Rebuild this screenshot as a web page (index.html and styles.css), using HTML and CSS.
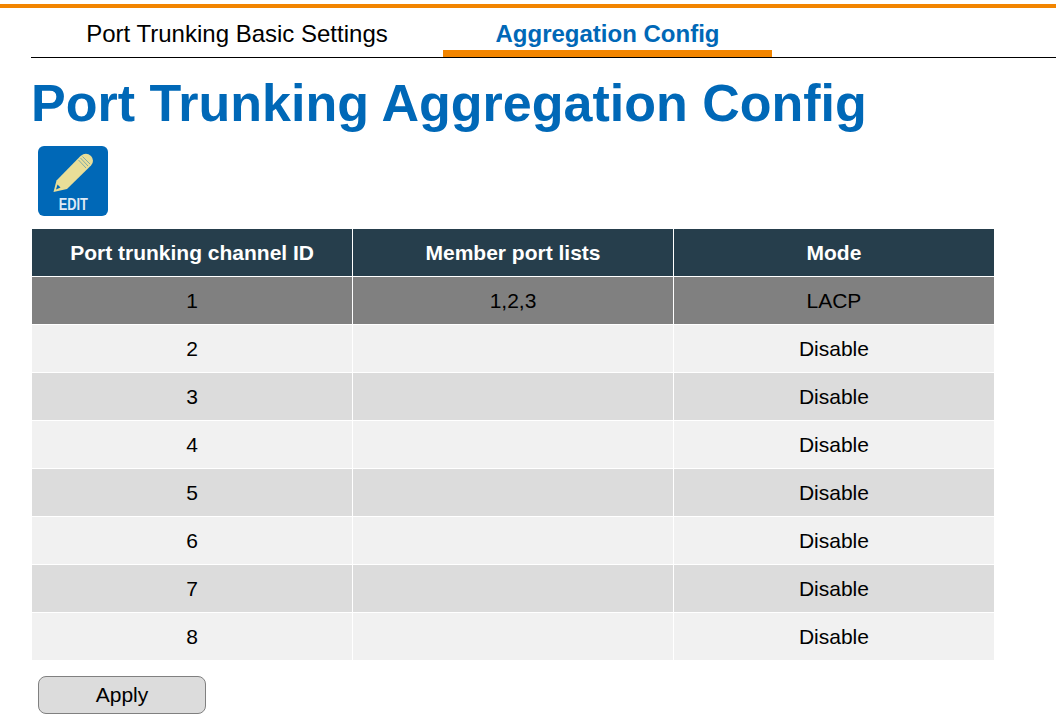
FILE: index.html
```html
<!DOCTYPE html>
<html lang="en">
<head>
    <meta charset="UTF-8">
    <title>Port Trunking Aggregation Config</title>
    <link rel="stylesheet" href="styles.css">
</head>
<body>
    <div class="top-bar"></div>
    <ul class="tabs">
        <li class="tab tab-basic">Port Trunking Basic Settings</li>
        <li class="tab tab-active">Aggregation Config</li>
    </ul>
    <h1>Port Trunking Aggregation Config</h1>
    <a class="edit-btn" href="#">
        <svg class="edit-icon" width="40" height="40" viewBox="0 0 40 40">
            <path class="pencil" d="M0.500 39 L3.500 27.500 L27.500 3 Q33 -1.500 38 3 Q42 7.500 38 12.500 L14 36 Z"/>
            <path class="pencil-lines" d="M27.500 5 L35 13 M29.500 3.500 L37 11 M25.500 7 L33 15"/>
            <path class="pencil-tip" d="M3 36.500 L4.500 31.500 L7.500 34.500 Z"/>
        </svg>
        <span class="edit-label">EDIT</span>
    </a>
    <table class="trunk-table">
        <thead>
            <tr><th>Port trunking channel ID</th><th>Member port lists</th><th>Mode</th></tr>
        </thead>
        <tbody>
            <tr class="selected"><td>1</td><td>1,2,3</td><td>LACP</td></tr>
            <tr><td>2</td><td></td><td>Disable</td></tr>
            <tr><td>3</td><td></td><td>Disable</td></tr>
            <tr><td>4</td><td></td><td>Disable</td></tr>
            <tr><td>5</td><td></td><td>Disable</td></tr>
            <tr><td>6</td><td></td><td>Disable</td></tr>
            <tr><td>7</td><td></td><td>Disable</td></tr>
            <tr><td>8</td><td></td><td>Disable</td></tr>
        </tbody>
    </table>
    <button class="apply" type="button">Apply</button>
</body>
</html>
```

FILE: styles.css
```css
html, body { margin: 0; padding: 0; background: white; overflow: hidden; }
body { font-family: "Liberation Sans", Arial, sans-serif; color: black; height: 722px; padding-top: 4px; box-sizing: border-box; }
.top-bar { height: 4px; background: #f28500; }
.tabs { display: flex; list-style: none; margin: 0 0 0 31px; padding: 0; height: 49px; border-bottom: 1px solid black; box-sizing: content-box; }
.tab { font-size: 24px; line-height: 52px; height: 49px; text-align: center; box-sizing: border-box; }
.tab-basic { width: 412px; }
.tab-active { width: 329px; color: #0068b7; font-weight: bold; border-bottom: 7px solid #f28500; }
h1 { font-size: 52px; line-height: 62px; color: #0068b7; margin: 14px 0 0 31px; font-weight: bold; white-space: nowrap; }
.edit-btn { display: flex; flex-direction: column; align-items: center; width: 70px; height: 70px; margin: 12px 0 0 38px; background: #0068b7; border-radius: 6px; text-decoration: none; box-sizing: border-box; padding-top: 7px; }
.edit-icon { display: block; }
.pencil { fill: #e9de98; }
.pencil-lines { stroke: #0068b7; stroke-width: 0.8; fill: none; opacity: 0.55; }
.pencil-tip { fill: #0068b7; }
.edit-label { font-size: 16px; line-height: 16px; margin-top: 4px; font-weight: bold; color: #dfeaf5; transform: scaleX(0.8); }
.trunk-table { border-collapse: collapse; table-layout: fixed; width: 962px; margin: 12px 0 0 32px; }
.trunk-table th, .trunk-table td { height: 48px; padding: 0; text-align: center; font-size: 21px; border: 1px solid white; box-sizing: border-box; }
.trunk-table th:first-child, .trunk-table td:first-child { border-left: 0; }
.trunk-table th:last-child, .trunk-table td:last-child { border-right: 0; }
.trunk-table thead tr { background: #263e4c; color: white; }
.trunk-table tbody tr:nth-child(even) { background: #f1f1f1; }
.trunk-table tbody tr:nth-child(odd) { background: #dcdcdc; }
.trunk-table tbody tr.selected { background: #808080; }
.apply { display: block; width: 168px; height: 38px; margin: 15px 0 0 38px; padding: 0; background: #dcdcdc; border: 1px solid #808080; border-radius: 8px; font-family: inherit; font-size: 21px; color: black; }
```
